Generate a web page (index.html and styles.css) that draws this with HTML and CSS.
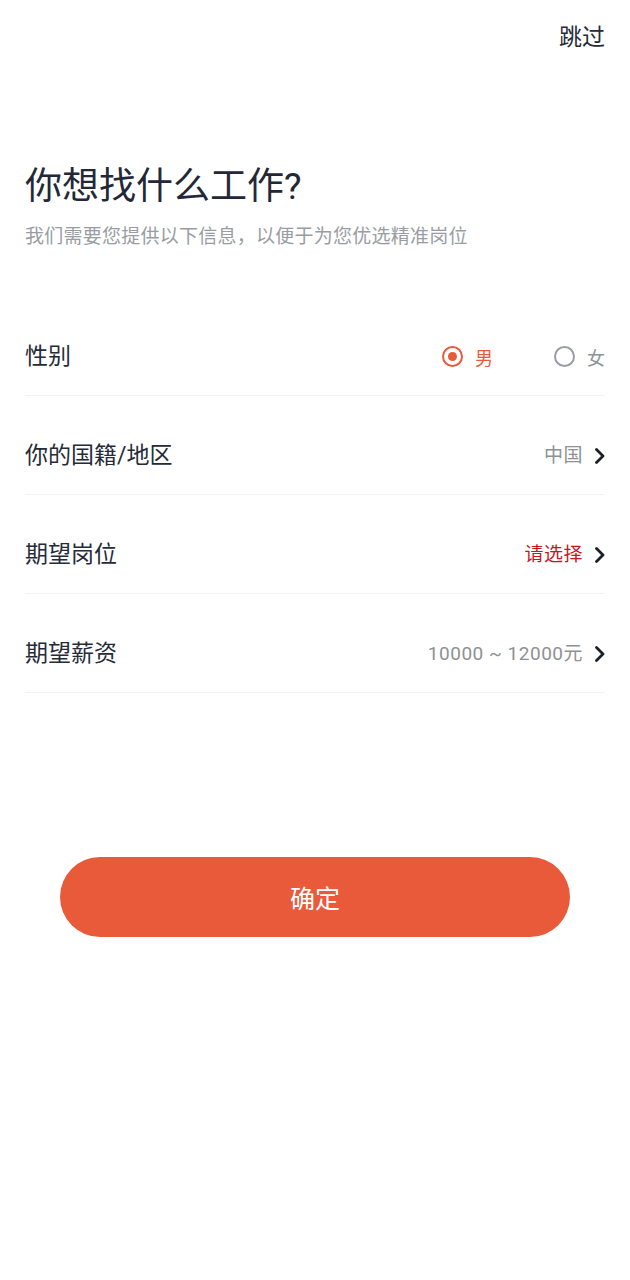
FILE: index.html
```html
<!DOCTYPE html>
<html lang="zh-CN">
<head>
    <meta charset="UTF-8">
    <meta name="viewport" content="width=device-width, initial-scale=1.0">
    <title>求职意向</title>
    <link rel="stylesheet" href="styles.css">
</head>
<body>
    <div class="page">
        <div class="top-bar">
            <a href="#" class="skip">跳过</a>
        </div>
        <h1 class="page-title">你想找什么工作?</h1>
        <p class="page-desc">我们需要您提供以下信息，以便于为您优选精准岗位</p>

        <ul class="form-list">
            <li class="form-row">
                <span class="row-label">性别</span>
                <div class="gender">
                    <label class="radio checked"><i class="radio-dot"></i>男</label>
                    <label class="radio"><i class="radio-dot"></i>女</label>
                </div>
            </li>
            <li class="form-row">
                <span class="row-label">你的国籍/地区</span>
                <span class="row-value">中国<svg class="arrow" viewBox="0 0 10 16"><path d="M1.5 1.5 L8 8 L1.5 14.5"/></svg></span>
            </li>
            <li class="form-row">
                <span class="row-label">期望岗位</span>
                <span class="row-value empty">请选择<svg class="arrow" viewBox="0 0 10 16"><path d="M1.5 1.5 L8 8 L1.5 14.5"/></svg></span>
            </li>
            <li class="form-row">
                <span class="row-label">期望薪资</span>
                <span class="row-value">10000 ~ 12000元<svg class="arrow" viewBox="0 0 10 16"><path d="M1.5 1.5 L8 8 L1.5 14.5"/></svg></span>
            </li>
        </ul>

        <div class="btn-wrap">
            <button class="submit-btn">确定</button>
        </div>
    </div>
</body>
</html>
```

FILE: styles.css
```css
* {
    margin: 0;
    padding: 0;
    box-sizing: border-box;
}
body {
    font-family: Roboto, "Noto Sans CJK SC", sans-serif;
    background-color: #fff;
    color: #262b38;
    width: 630px;
    min-height: 1280px;
}
.page {
    padding: 0 25px;
}
.top-bar {
    display: flex;
    justify-content: flex-end;
    height: 78px;
    padding-top: 22px;
}
.skip {
    font-size: 23px;
    line-height: 32px;
    color: #262b38;
    text-decoration: none;
}
.page-title {
    margin-top: 86px;
    font-size: 37px;
    font-weight: 400;
    line-height: 46px;
    color: #232838;
}
.page-desc {
    margin-top: 14px;
    font-size: 19px;
    line-height: 26px;
    color: #999da3;
    letter-spacing: 0.25px;
}
.form-list {
    list-style: none;
    margin-top: 47px;
}
.form-row {
    display: flex;
    align-items: center;
    justify-content: space-between;
    height: 99px;
    padding-top: 21px;
    border-bottom: 1px solid #f1f2f4;
}
.row-label {
    font-size: 23px;
    line-height: 30px;
    color: #262b38;
}
.row-value {
    display: flex;
    align-items: center;
    font-size: 19px;
    line-height: 26px;
    letter-spacing: 0.5px;
    color: #8e9196;
}
.row-value.empty {
    color: #c8161d;
}
.arrow {
    width: 10px;
    height: 16px;
    margin-left: 12px;
    fill: none;
    stroke: #1c1f26;
    stroke-width: 2.8;
    stroke-linecap: round;
    stroke-linejoin: round;
}
.gender {
    display: flex;
    gap: 61px;
}
.radio {
    display: flex;
    align-items: center;
    font-size: 18px;
    color: #8e9196;
}
.radio-dot {
    width: 21px;
    height: 21px;
    margin-right: 12px;
    border: 2px solid #999ca1;
    border-radius: 50%;
    display: flex;
    align-items: center;
    justify-content: center;
}
.radio.checked {
    color: #e85a3c;
}
.radio.checked .radio-dot {
    border-color: #e85a3c;
}
.radio.checked .radio-dot::after {
    content: '';
    width: 9px;
    height: 9px;
    border-radius: 50%;
    background-color: #e85a3c;
}
.btn-wrap {
    padding: 0 35px;
    margin-top: 164px;
}
.submit-btn {
    width: 100%;
    height: 80px;
    border: none;
    border-radius: 40px;
    background-color: #e95a3a;
    color: #fff;
    font-family: inherit;
    font-size: 25px;
    cursor: pointer;
}
```
